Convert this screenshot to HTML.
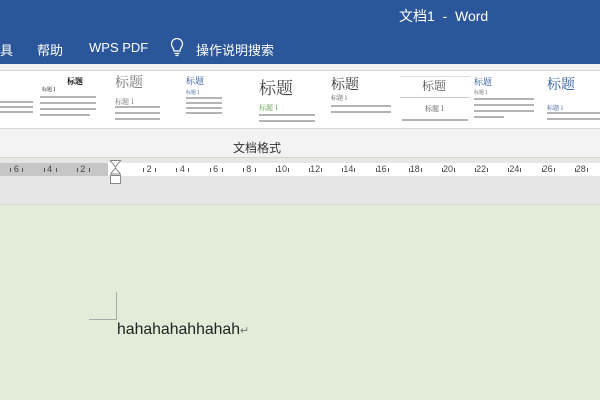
<!DOCTYPE html>
<html><head><meta charset="utf-8"><style>
*{margin:0;padding:0;box-sizing:border-box}
body{width:600px;height:400px;overflow:hidden;position:relative;font-family:"Liberation Sans","Noto Sans CJK SC",sans-serif;background:#e1edd8}
.abs{position:absolute}
.blue{left:0;top:0;width:600px;height:64px;background:#2b579a;color:#fff}
.gal{left:0;top:64px;width:600px;height:67px;background:#f3f3f3}
.galin{left:0;top:70px;width:600px;height:59px;background:#fff;border-top:1px solid #d8d8d8;border-bottom:1px solid #d8d8d8}
.it{position:absolute;top:0;height:57px;font-family:"Noto Serif CJK SC",serif;overflow:hidden}
.ln{position:absolute;height:2px;background:#777;opacity:.55}
</style></head><body>
<div class="abs blue">
  <div class="abs" style="left:399px;top:6px;font-size:14px;">文档1&nbsp; - &nbsp;Word</div>
  <div class="abs" style="left:0;top:40px;font-size:13px;">具</div>
  <div class="abs" style="left:37px;top:40px;font-size:13px;">帮助</div>
  <div class="abs" style="left:89px;top:40px;font-size:13px;">WPS PDF</div>
  <svg class="abs" style="left:170px;top:38px" width="14" height="20" viewBox="0 0 14 20"><path d="M4 13 C4 10 1.5 9 1.5 6 A5.5 5.5 0 0 1 12.5 6 C12.5 9 10 10 10 13 Z M4.5 15.5 H9.5 M5.5 17.5 H8.5" fill="none" stroke="#fff" stroke-width="1.2"/></svg>
  <div class="abs" style="left:196px;top:40px;font-size:13px;">操作说明搜索</div>
</div>
<div class="abs gal"></div>
<div class="abs galin">
  <div class="it" style="left:0;width:35px"><div class="ln" style="left:0;top:30px;width:33px"></div><div class="ln" style="left:0;top:35px;width:33px"></div><div class="ln" style="left:0;top:40px;width:33px"></div></div>
  <div class="it" style="left:40px;width:60px"><div class="abs" style="left:27px;top:5px;font-size:8px;font-weight:bold">标题</div><div class="abs" style="left:2px;top:15px;font-size:5px">标题 1</div><div class="ln" style="left:0;top:25px;width:56px"></div><div class="ln" style="left:0;top:31px;width:56px"></div><div class="ln" style="left:0;top:37px;width:56px"></div><div class="ln" style="left:0;top:43px;width:50px"></div></div>
  <div class="it" style="left:100px;width:60px"><div class="abs" style="left:15px;top:1px;font-size:14px;color:#777">标题</div><div class="abs" style="left:15px;top:26px;font-size:7px;color:#777">标题 1</div><div class="ln" style="left:15px;top:35px;width:46px"></div><div class="ln" style="left:15px;top:41px;width:46px"></div><div class="ln" style="left:15px;top:47px;width:46px"></div></div>
  <div class="it" style="left:162px;width:60px"><div class="abs" style="left:24px;top:3px;font-size:9px;color:#2b579a">标题</div><div class="abs" style="left:24px;top:18px;font-size:5px;color:#2b579a">标题 1</div><div class="ln" style="left:24px;top:26px;width:40px"></div><div class="ln" style="left:24px;top:31px;width:40px"></div><div class="ln" style="left:24px;top:36px;width:40px"></div><div class="ln" style="left:24px;top:41px;width:40px"></div></div>
  <div class="it" style="left:225px;width:100px"><div class="abs" style="left:34px;top:3px;font-size:17px;color:#444">标题</div><div class="abs" style="left:34px;top:32px;font-size:7px;color:#5b9e4d">标题 1</div><div class="ln" style="left:34px;top:43px;width:56px"></div><div class="ln" style="left:34px;top:49px;width:56px"></div></div>
  <div class="it" style="left:325px;width:70px"><div class="abs" style="left:6px;top:3px;font-size:14px;color:#333">标题</div><div class="abs" style="left:6px;top:22px;font-size:6px;color:#555">标题 1</div><div class="ln" style="left:6px;top:34px;width:60px"></div><div class="ln" style="left:6px;top:40px;width:60px"></div></div>
  <div class="it" style="left:400px;width:70px"><div class="abs" style="left:0;top:5px;width:70px;height:1px;background:#ddd"></div><div class="abs" style="left:22px;top:6px;font-size:12px;color:#555">标题</div><div class="abs" style="left:0;top:26px;width:70px;height:1px;background:#ccc"></div><div class="abs" style="left:25px;top:33px;font-size:7px;color:#555">标题 1</div><div class="ln" style="left:2px;top:48px;width:66px"></div></div>
  <div class="it" style="left:474px;width:65px"><div class="abs" style="left:0;top:4px;font-size:9px;color:#2b579a">标题</div><div class="abs" style="left:0;top:18px;font-size:5px;color:#555">标题 1</div><div class="ln" style="left:0;top:27px;width:60px"></div><div class="ln" style="left:0;top:33px;width:60px"></div><div class="ln" style="left:0;top:39px;width:60px"></div><div class="ln" style="left:0;top:45px;width:30px"></div></div>
  <div class="it" style="left:547px;width:53px"><div class="abs" style="left:0;top:3px;font-size:14px;color:#2b579a">标题</div><div class="abs" style="left:0;top:32px;font-size:6px;color:#2b579a">标题 1</div><div class="ln" style="left:0;top:41px;width:53px"></div><div class="ln" style="left:0;top:47px;width:53px"></div></div>
</div>
<div class="abs" style="left:0;top:131px;width:600px;height:27px;background:#f3f3f3;border-bottom:1px solid #d4d4d4"></div>
<div class="abs" style="left:233px;top:139px;font-size:12px;color:#333">文档格式</div>
<div class="abs" style="left:0;top:159px;width:600px;height:46px;background:#e6e6e6;border-bottom:1px solid #d0d8c8"></div>
<div class="abs" style="left:0;top:163px;width:108px;height:13px;background:#c6c6c6"></div>
<div class="abs" style="left:108px;top:163px;width:492px;height:13px;background:#fff"></div>
<div class="abs" id="ruler" style="left:0;top:163px;width:600px;height:13px;font-size:9px;color:#444"></div>
<svg class="abs" style="left:108px;top:160px" width="16" height="26"><path d="M2.5 0.5 H12.5 L7.5 7 Z M7.5 8 L2.5 14 H12.5 Z M2.5 15.5 H12.5 V23.5 H2.5 Z" fill="#fff" stroke="#888"/></svg>
<svg class="abs" style="left:0;top:0" width="600" height="400"><path d="M116.5 292 V319.5 H89" fill="none" stroke="#a9a9a9"/></svg>
<div class="abs" style="left:117px;top:321px;font-size:15.8px;color:#222">hahahahahhahah<span style="font-size:11px;color:#777">↵</span></div>
<script>
var r=document.getElementById('ruler'),h='';
for(var u=-8;u<=30;u++){var x=116+u*16.6;if(u==0)continue;
if(u%2==0){h+='<div style="position:absolute;left:'+(x-8)+'px;width:16px;text-align:center;top:0;line-height:13px">'+Math.abs(u)+'</div>';
h+='<div style="position:absolute;left:'+(x-6)+'px;top:5px;width:1px;height:4px;background:#555"></div>';
h+='<div style="position:absolute;left:'+(x+6)+'px;top:5px;width:1px;height:4px;background:#555"></div>';}
}
r.innerHTML=h;
</script>
</body></html>
